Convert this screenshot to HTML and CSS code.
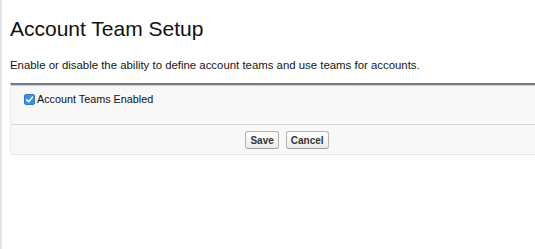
FILE: index.html
```html
<!DOCTYPE html>
<html lang="en">
<head>
    <meta charset="UTF-8">
    <meta name="viewport" content="width=device-width, initial-scale=1.0">
    <title>Account Team Setup</title>
    <link rel="stylesheet" href="styles.css">
</head>
<body>
    <div class="page">
        <h1 class="page-title">Account Team Setup</h1>
        <p class="page-desc">Enable or disable the ability to define account teams and use teams for accounts.</p>

        <form class="setup-panel">
            <div class="panel-body">
                <label class="check-row">
                    <span class="check-box">
                        <svg width="9" height="9" viewBox="0 0 9 9">
                            <path d="M1.6 4.7 L3.6 6.7 L7.4 2.2" fill="none" stroke="#fff" stroke-width="1.6" stroke-linecap="round" stroke-linejoin="round"/>
                        </svg>
                    </span>
                    Account Teams Enabled
                </label>
            </div>
            <div class="panel-buttons">
                <button type="button" class="btn">Save</button>
                <button type="button" class="btn">Cancel</button>
            </div>
        </form>
    </div>
</body>
</html>
```
FILE: styles.css
```css
/* Base */
* {
    margin: 0;
    padding: 0;
    box-sizing: border-box;
}

body {
    background-color: #fff;
    color: #000;
    font-family: "Liberation Sans", Arial, sans-serif;
    overflow: hidden;
}

.page {
    min-height: 249px;
    border-left: 2px solid #e4e4e4;
    padding: 17px 0 0 8px;
    overflow: hidden;
}

/* Heading */
.page-title {
    font-size: 21px;
    font-weight: normal;
    line-height: 24px;
    color: #111;
}

.page-desc {
    margin-top: 17px;
    font-size: 11.4px;
    line-height: 15px;
    color: #161616;
}

/* Panel */
.setup-panel {
    width: 553px;
    margin-top: 10px;
    background-color: #f8f8f8;
    border-top: 2px solid #747c87;
    border-left: 1px solid #ececec;
    border-bottom: 1px solid #e6e6e6;
    border-radius: 0 0 0 4px;
    box-shadow: inset 0 1px 0 #cdd1d6;
}

.panel-body {
    height: 40px;
    padding: 8px 0 0 13px;
    border-bottom: 1px solid #d6d6d6;
}

.check-row {
    display: flex;
    align-items: center;
    gap: 2px;
    font-size: 10.8px;
    line-height: 12px;
    color: #111;
}

.check-box {
    display: flex;
    align-items: center;
    justify-content: center;
    width: 11px;
    height: 11px;
    border-radius: 2px;
    background-color: #3b8fe9;
    border: 1px solid #2f7bd0;
}

/* Buttons */
.panel-buttons {
    display: flex;
    justify-content: center;
    gap: 7px;
    padding: 6px 0 5px;
}

.btn {
    height: 18px;
    padding: 0 4px;
    font-family: "Liberation Sans", Arial, sans-serif;
    font-size: 10px;
    font-weight: bold;
    color: #333;
    background: linear-gradient(#ffffff, #ececec);
    border: 1px solid #b3b3b3;
    border-bottom-color: #9c9c9c;
    border-radius: 3px;
    cursor: pointer;
}
```
